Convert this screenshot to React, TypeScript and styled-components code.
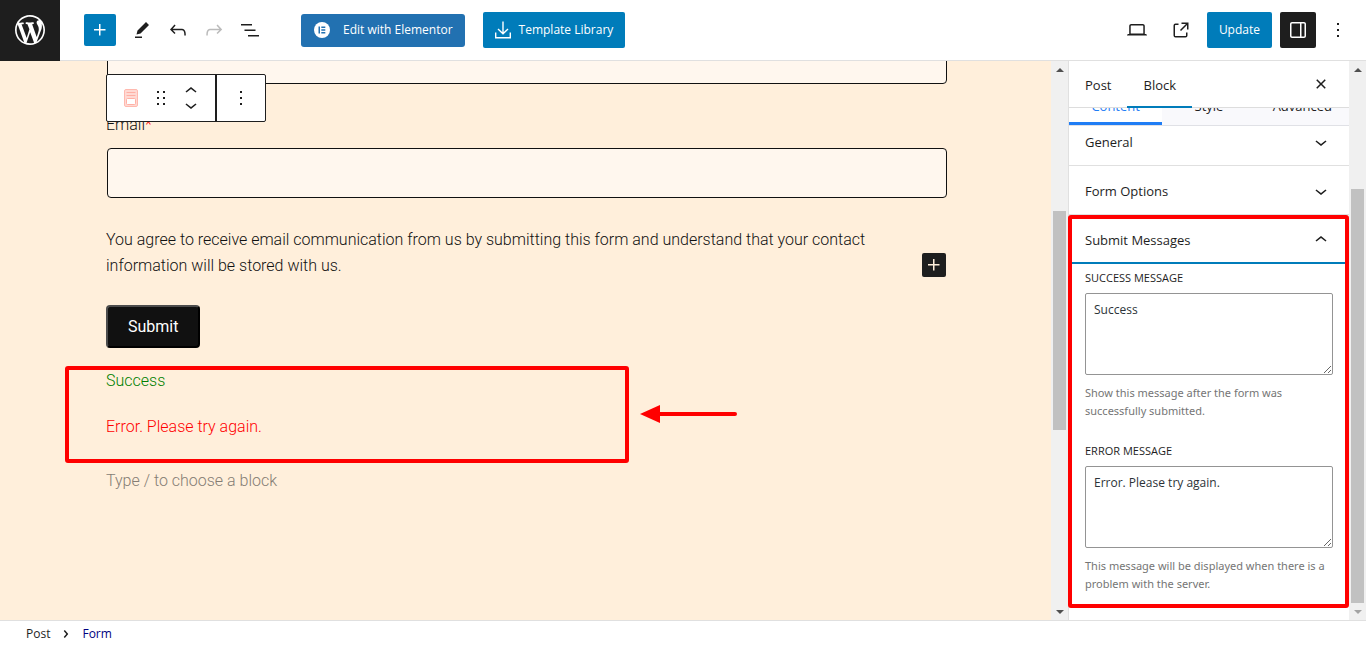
import React from "react";
import styled, { createGlobalStyle } from "styled-components";

const UI_FONT = '"Open Sans", "Noto Sans", sans-serif';
const BLUE = "#007cba";
const INK = "#1e1e1e";
const RED = "#ff0000";

const GlobalStyle = createGlobalStyle`
  *, *::before, *::after { box-sizing: border-box; }
  body { margin: 0; background: #fff; color: ${INK}; font: 12px/20px ${UI_FONT}; }
  button { font: inherit; color: inherit; border: 0; padding: 0; background: none; cursor: pointer; }
  p { margin: 0; }
  svg { flex: none; }
`;

const Page = styled.div`
  display: flex;
  flex-direction: column;
  height: 100vh;
  min-height: 640px;
`;

/* Header */
const Header = styled.header`
  display: flex;
  align-items: center;
  justify-content: space-between;
  flex: none;
  height: 61px;
  padding-right: 10px;
  border-bottom: 1px solid #e0e0e0;
`;
const Logo = styled.a`
  display: flex;
  align-items: center;
  justify-content: center;
  width: 60px;
  height: 61px;
  background: ${INK};
  color: #fff;
`;
const HeaderGroup = styled.div<{ $gap?: number }>`
  display: flex;
  align-items: center;
  gap: ${(p) => p.$gap ?? 0}px;
`;
const Tools = styled.div`
  display: flex;
  align-items: center;
  margin: 0 33px 0 8px;
`;
const ToolButton = styled.button<{ $muted?: boolean; $dark?: boolean }>`
  display: flex;
  align-items: center;
  justify-content: center;
  width: 36px;
  height: 36px;
  border-radius: 2px;
  color: ${(p) => (p.$dark ? "#fff" : p.$muted ? "#bbb" : INK)};
  background: ${(p) => (p.$dark ? INK : "transparent")};
`;
const AddButton = styled.button`
  display: flex;
  align-items: center;
  justify-content: center;
  width: 32px;
  height: 32px;
  margin-left: 24px;
  border-radius: 2px;
  background: ${BLUE};
  color: #fff;
`;
const PrimaryButton = styled.button<{ $elementor?: boolean }>`
  display: flex;
  align-items: center;
  gap: ${(p) => (p.$elementor ? 12 : 8)}px;
  height: ${(p) => (p.$elementor ? 33 : 36)}px;
  padding: 0 12px;
  border-radius: ${(p) => (p.$elementor ? 3 : 2)}px;
  background: ${(p) => (p.$elementor ? "#2271b1" : BLUE)};
  color: #fff;
  white-space: nowrap;
`;

/* Body */
const Body = styled.div`
  display: flex;
  flex: 1;
  min-height: 0;
`;
const Canvas = styled.main`
  position: relative;
  flex: 1;
  min-width: 0;
  overflow: hidden;
  background: #ffefdb;
  color: #111;
  font: 300 16px/26px Roboto, sans-serif;
`;
const Form = styled.form`
  display: flex;
  flex-direction: column;
  margin-top: -27px;
  padding: 0 104px 0 106px;
`;
const FieldInput = styled.input`
  height: 50px;
  margin-left: 1px;
  padding: 0 16px;
  border: 1px solid #111;
  border-radius: 4px;
  background: #fff7ee;
  font: inherit;
`;
const FieldLabel = styled.label`
  margin: 28px 0 10px;
  span { color: ${RED}; }
`;
const Consent = styled.p`
  position: relative;
  margin: 29px 0 26px;
  padding-right: 60px;
`;
const InlineAdd = styled.button`
  position: absolute;
  right: 1px;
  bottom: 2px;
  display: flex;
  align-items: center;
  justify-content: center;
  width: 24px;
  height: 24px;
  border-radius: 2px;
  background: ${INK};
  color: #ffefdb;
`;
const SubmitButton = styled.button`
  align-self: flex-start;
  height: 43px;
  padding: 0 20px;
  border: 2px outset #111;
  border-color: #4c4c4c #000 #000 #4c4c4c;
  border-radius: 4px;
  background: #111;
  color: #fff;
  font-weight: 400;
`;
const Messages = styled.div`
  position: relative;
  display: flex;
  flex-direction: column;
  gap: 20px;
  margin: 20px 0 28px;
`;
const Message = styled.p<{ $error?: boolean }>`
  color: ${(p) => (p.$error ? RED : "#008000")};
`;
const MessagesMark = styled.div`
  position: absolute;
  top: -2px;
  left: -41px;
  width: 564px;
  height: 97px;
  border: 4px solid ${RED};
  border-radius: 3px;
`;
const Arrow = styled.svg`
  position: absolute;
  top: 37px;
  left: 534px;
`;
const Prompt = styled.p`
  color: #857d74;
`;
const BlockToolbar = styled.div`
  position: absolute;
  top: 13px;
  left: 106px;
  display: flex;
  height: 48px;
  border: 1px solid ${INK};
  border-radius: 2px;
  background: #fff;
  color: ${INK};
`;
const ToolbarGroup = styled.div`
  display: flex;
  align-items: center;
  & + & { border-left: 2px solid ${INK}; }
`;
const ToolbarButton = styled.button<{ $width: number }>`
  display: flex;
  align-items: center;
  justify-content: center;
  width: ${(p) => p.$width}px;
  height: 46px;
`;
const Movers = styled.div`
  display: flex;
  flex-direction: column;
  width: 48px;
  button {
    display: flex;
    align-items: center;
    justify-content: center;
    height: 14px;
    overflow: hidden;
  }
`;

/* Scrollbar */
const Track = styled.div`
  display: flex;
  flex-direction: column;
  flex: none;
  width: 17px;
  background: #f0f0f0;
`;
const TrackEnd = styled.div`
  display: flex;
  align-items: center;
  justify-content: center;
  height: 17px;
`;
const TrackSpace = styled.div<{ $grow: number }>`
  flex: ${(p) => p.$grow} 1 0;
`;
const Thumb = styled.div<{ $grow: number }>`
  flex: ${(p) => p.$grow} 1 0;
  margin: 0 2px;
  background: #c1c1c1;
`;

/* Sidebar */
const Sidebar = styled.aside`
  display: flex;
  flex: none;
  width: 298px;
  border-left: 1px solid #e0e0e0;
`;
const SidebarMain = styled.div`
  flex: 1;
  min-width: 0;
`;
const SidebarHeader = styled.div`
  display: flex;
  align-items: center;
  height: 47px;
  padding-right: 16px;
  border-bottom: 1px solid #ddd;
`;
const SidebarTab = styled.button<{ $active?: boolean }>`
  height: 47px;
  margin-bottom: -1px;
  padding: 2px 16px 0;
  border-bottom: 2px solid ${(p) => (p.$active ? BLUE : "transparent")};
  font-size: 13px;
`;
const CloseButton = styled.button`
  display: flex;
  margin-left: auto;
`;
const PanelTabs = styled.div`
  position: relative;
  z-index: 1;
  display: flex;
  align-items: flex-end;
  height: 18px;
  overflow: hidden;
  border-bottom: 1px solid #e0e1e6;
  background: #f9f9fc;
`;
const PanelTab = styled.button<{ $active?: boolean }>`
  flex: 1;
  height: 41px;
  padding-top: 5px;
  border-bottom: 3px solid ${(p) => (p.$active ? "#1f7df5" : "transparent")};
  background: ${(p) => (p.$active ? "#fff" : "transparent")};
  color: ${(p) => (p.$active ? "#1f7df5" : INK)};
  font-size: 13px;
`;
const Panels = styled.div`
  margin-top: -9px;
`;
const PanelHeader = styled.button<{ $open?: boolean }>`
  display: flex;
  align-items: center;
  justify-content: space-between;
  width: 100%;
  height: 49px;
  padding: 2px 16px 0;
  border-bottom: ${(p) => (p.$open ? `2px solid ${BLUE}` : "1px solid #e0e0e0")};
  font-size: 13px;
`;
const OpenPanel = styled.section`
  position: relative;
  padding-bottom: 15px;
`;
const PanelMark = styled.div`
  position: absolute;
  top: 0;
  left: -1px;
  right: 0;
  bottom: 0;
  border: 4px solid ${RED};
  border-radius: 3px;
  pointer-events: none;
`;
const Control = styled.div`
  display: flex;
  flex-direction: column;
  margin: 4px 16px 0;
  & + & { margin-top: 21px; }
`;
const ControlLabel = styled.label`
  margin-bottom: 5px;
  font-size: 11px;
  font-weight: 500;
  text-transform: uppercase;
`;
const TextArea = styled.textarea`
  height: 82px;
  padding: 6px 8px;
  border: 1px solid #949494;
  border-radius: 2px;
  color: #2c3338;
  font: 12px/20px ${UI_FONT};
  resize: vertical;
`;
const Help = styled.p`
  margin-top: 9px;
  color: #757575;
  font: 11px/18px "Noto Sans", sans-serif;
`;

/* Footer */
const Footer = styled.footer`
  flex: none;
  height: 25px;
  padding-left: 26px;
  border-top: 1px solid #e0e0e0;
`;
const Crumbs = styled.nav`
  display: flex;
  align-items: center;
  height: 24px;
  padding-top: 2px;
`;
const Crumb = styled.a<{ $current?: boolean }>`
  color: ${(p) => (p.$current ? "#000080" : INK)};
  text-decoration: none;
`;
const CrumbGap = styled.span`
  display: flex;
  justify-content: center;
  width: 32px;
`;

const paths = {
  plus: "M11 12.5V17.5H12.5V12.5H17.5V11H12.5V6H11V11H6V12.5H11Z",
  edit: "m19 7-3-3-8.5 8.5-1 4 4-1L19 7Zm-7 11.5H5V20h7v-1.5Z",
  undo: "M18.3 11.7c-.6-.6-1.4-.9-2.3-.9H6.7l2.9-3.3-1.1-1-4.5 5L8.5 16l1-1-2.7-2.7H16c.5 0 .9.2 1.3.5 1 1 1 3.4 1 4.5v.3h1.5v-.2c0-1.5 0-4.3-1.5-5.7z",
  redo: "M15.6 6.5l-1.1 1 2.9 3.3H8c-.9 0-1.7.3-2.3.9-1.4 1.5-1.4 4.2-1.4 5.6v.2h1.5v-.3c0-1.1 0-3.5 1-4.5.3-.3.7-.5 1.3-.5h9.2L14.5 15l1.1 1.1 4.6-4.6-4.6-5z",
  list: "M3 6h11v1.5H3V6Zm3.5 5.5h11V13h-11v-1.5ZM21 17H10v1.5h11V17Z",
  laptop: "M20.5 16h-.7V8c0-1.1-.9-2-2-2H6.2c-1.1 0-2 .9-2 2v8h-.7c-.8 0-1.5.7-1.5 1.5h20c0-.8-.7-1.5-1.5-1.5zM5.7 8c0-.3.2-.5.5-.5h11.6c.3 0 .5.2.5.5v7.6H5.7V8z",
  external: "M19.5 4.5h-7V6h4.44l-5.97 5.97 1.06 1.06L18 7.06v4.44h1.5v-7Zm-13 1a2 2 0 0 0-2 2v10a2 2 0 0 0 2 2h10a2 2 0 0 0 2-2v-3H17v3a.5.5 0 0 1-.5.5h-10a.5.5 0 0 1-.5-.5v-10a.5.5 0 0 1 .5-.5h3V5.5h-3Z",
  drawer: "M18 4H6c-1.1 0-2 .9-2 2v12c0 1.1.9 2 2 2h12c1.1 0 2-.9 2-2V6c0-1.1-.9-2-2-2zm-4 14.5H6c-.3 0-.5-.2-.5-.5V6c0-.3.2-.5.5-.5h8v13zm4.5-.5c0 .3-.2.5-.5.5h-2.5v-13H18c.3 0 .5.2.5.5v12z",
  more: "M13 19h-2v-2h2v2zm0-6h-2v-2h2v2zm0-6h-2V5h2v2z",
  close: "M12 13.06l3.712 3.713 1.061-1.06L13.061 12l3.712-3.712-1.06-1.06L12 10.938 8.288 7.227l-1.061 1.06L10.939 12l-3.712 3.712 1.06 1.061L12 13.061z",
  down: "M17.5 11.6L12 16l-5.5-4.4.9-1.2L12 14l4.5-3.6 1 1.2z",
  up: "M6.5 12.4L12 8l5.5 4.4-.9 1.2L12 10l-4.5 3.6-1-1.2z",
  drag: "M8 7h2V5H8v2zm0 6h2v-2H8v2zm0 6h2v-2H8v2zm6-14v2h2V5h-2zm0 8h2v-2h-2v2zm0 6h2v-2h-2v2z",
  right: "M10.8622 8.04053L14.2805 12.0286L10.8622 16.0167L9.72327 15.0405L12.3049 12.0286L9.72327 9.01672L10.8622 8.04053Z",
};

const Icon = ({ name }: { name: keyof typeof paths }) => (
  <svg width="24" height="24" viewBox="0 0 24 24" fill="currentColor" fillRule="evenodd" aria-hidden="true">
    <path d={paths[name]} />
  </svg>
);

const WordPressMark = () => (
  <svg width="36" height="36" viewBox="-2 -2 24 24" fill="currentColor" aria-hidden="true">
    <path d="M20 10c0-5.51-4.49-10-10-10C4.48 0 0 4.49 0 10c0 5.52 4.48 10 10 10 5.51 0 10-4.48 10-10zM7.78 15.37L4.37 6.22c.55-.02 1.17-.08 1.17-.08.5-.06.44-1.13-.06-1.11 0 0-1.45.11-2.37.11-.18 0-.37 0-.58-.01C4.12 2.69 6.87 1.11 10 1.11c2.33 0 4.45.87 6.05 2.34-.68-.11-1.65.39-1.65 1.58 0 .74.45 1.36.9 2.1.35.61.55 1.36.55 2.46 0 1.49-1.4 5-1.4 5l-3.03-8.37c.54-.02.82-.17.82-.17.5-.05.44-1.25-.06-1.22 0 0-1.44.12-2.38.12-.87 0-2.33-.12-2.33-.12-.5-.03-.56 1.2-.06 1.22l.92.08 1.26 3.41zM17.41 10c.24-.64.74-1.87.43-4.25.7 1.29 1.05 2.71 1.05 4.25 0 3.29-1.73 6.24-4.4 7.78.97-2.59 1.94-5.2 2.92-7.78zM6.1 18.09C3.12 16.65 1.11 13.53 1.11 10c0-1.3.23-2.48.72-3.59C3.25 10.3 4.67 14.2 6.1 18.09zm4.03-6.63l2.58 6.98c-.86.29-1.76.45-2.71.45-.79 0-1.57-.11-2.29-.33.81-2.38 1.62-4.74 2.42-7.1z" />
  </svg>
);

const ElementorMark = () => (
  <svg width="18" height="18" viewBox="0 0 18 18" aria-hidden="true">
    <circle cx="9" cy="9" r="8" fill="#fff" />
    <path d="M5.5 5.5h1.5v7H5.5zM8.3 5.5h4v1.4h-4zM8.3 8.3h4v1.4h-4zM8.3 11.1h4v1.4h-4z" fill="#2271b1" />
  </svg>
);

const DownloadMark = () => (
  <svg width="16" height="18" viewBox="0 0 16 18" fill="none" stroke="currentColor" strokeWidth="1.4" aria-hidden="true">
    <path d="M8 .5v12M3 8l5 4.8L13 8M.7 11.5v5.2h14.6v-5.2" />
  </svg>
);

const FormMark = () => (
  <svg width="14" height="18" viewBox="0 0 14 18" aria-hidden="true">
    <rect x=".5" y=".5" width="13" height="17" rx="1.5" fill="#ffd9d3" stroke="#ffb9af" />
    <path d="M2.5 3.5h9M2.5 6.5h9" stroke="#ffb0a5" />
    <rect x="2.5" y="9.5" width="9" height="6" rx="1" fill="#fff" stroke="#ffb0a5" />
  </svg>
);

const Scrollbar = ({ before, size, after }: { before: number; size: number; after: number }) => (
  <Track aria-hidden="true">
    <TrackEnd>
      <svg width="8" height="4" viewBox="0 0 8 4"><path d="M4 0l4 4H0z" fill="#505050" /></svg>
    </TrackEnd>
    <TrackSpace $grow={before} />
    <Thumb $grow={size} />
    <TrackSpace $grow={after} />
    <TrackEnd>
      <svg width="8" height="4" viewBox="0 0 8 4"><path d="M0 0h8L4 4z" fill={after ? "#505050" : "#a3a3a3"} /></svg>
    </TrackEnd>
  </Track>
);

const messageControls = [
  { id: "success", label: "Success message", value: "Success", help: "Show this message after the form was successfully submitted." },
  { id: "error", label: "Error message", value: "Error. Please try again.", help: "This message will be displayed when there is a problem with the server." },
];

export default function App() {
  return (
    <>
      <GlobalStyle />
      <Page>
        <Header>
          <HeaderGroup>
            <Logo href="#" aria-label="View posts"><WordPressMark /></Logo>
            <AddButton aria-label="Add block"><Icon name="plus" /></AddButton>
            <Tools>
              <ToolButton aria-label="Tools"><Icon name="edit" /></ToolButton>
              <ToolButton aria-label="Undo"><Icon name="undo" /></ToolButton>
              <ToolButton aria-label="Redo" $muted><Icon name="redo" /></ToolButton>
              <ToolButton aria-label="Document overview"><Icon name="list" /></ToolButton>
            </Tools>
            <HeaderGroup $gap={18}>
              <PrimaryButton $elementor><ElementorMark />Edit with Elementor</PrimaryButton>
              <PrimaryButton><DownloadMark />Template Library</PrimaryButton>
            </HeaderGroup>
          </HeaderGroup>
          <HeaderGroup $gap={4}>
            <HeaderGroup $gap={8}>
              <ToolButton aria-label="Preview"><Icon name="laptop" /></ToolButton>
              <ToolButton aria-label="View post"><Icon name="external" /></ToolButton>
              <PrimaryButton>Update</PrimaryButton>
              <ToolButton aria-label="Settings" $dark><Icon name="drawer" /></ToolButton>
            </HeaderGroup>
            <ToolButton aria-label="Options"><Icon name="more" /></ToolButton>
          </HeaderGroup>
        </Header>

        <Body>
          <Canvas>
            <Form onSubmit={(e) => e.preventDefault()}>
              <FieldInput type="text" aria-label="Name" />
              <FieldLabel htmlFor="email">Email<span>*</span></FieldLabel>
              <FieldInput id="email" type="email" />
              <Consent>
                You agree to receive email communication from us by submitting this form and
                understand that your contact information will be stored with us.
                <InlineAdd type="button" aria-label="Add block"><Icon name="plus" /></InlineAdd>
              </Consent>
              <SubmitButton type="submit">Submit</SubmitButton>
              <Messages>
                <Message>Success</Message>
                <Message $error>Error. Please try again.</Message>
                <MessagesMark />
                <Arrow width="98" height="18" viewBox="0 0 98 18" aria-hidden="true">
                  <path d="M0 9L20 0v18z" fill={RED} />
                  <path d="M18 9h77" stroke={RED} strokeWidth="4" strokeLinecap="round" />
                </Arrow>
              </Messages>
              <Prompt>Type / to choose a block</Prompt>
            </Form>
            <BlockToolbar>
              <ToolbarGroup>
                <ToolbarButton $width={48} aria-label="Form"><FormMark /></ToolbarButton>
                <ToolbarButton $width={12} aria-label="Drag"><Icon name="drag" /></ToolbarButton>
                <Movers>
                  <button aria-label="Move up"><Icon name="up" /></button>
                  <button aria-label="Move down"><Icon name="down" /></button>
                </Movers>
              </ToolbarGroup>
              <ToolbarGroup>
                <ToolbarButton $width={48} aria-label="Options"><Icon name="more" /></ToolbarButton>
              </ToolbarGroup>
            </BlockToolbar>
          </Canvas>
          <Scrollbar before={133} size={219} after={173} />

          <Sidebar>
            <SidebarMain>
              <SidebarHeader>
                <SidebarTab>Post</SidebarTab>
                <SidebarTab $active>Block</SidebarTab>
                <CloseButton aria-label="Close settings"><Icon name="close" /></CloseButton>
              </SidebarHeader>
              <PanelTabs>
                <PanelTab $active>Content</PanelTab>
                <PanelTab>Style</PanelTab>
                <PanelTab>Advanced</PanelTab>
              </PanelTabs>
              <Panels>
                <PanelHeader>General<Icon name="down" /></PanelHeader>
                <PanelHeader>Form Options<Icon name="down" /></PanelHeader>
                <OpenPanel>
                  <PanelHeader $open>Submit Messages<Icon name="up" /></PanelHeader>
                  {messageControls.map((c) => (
                    <Control key={c.id}>
                      <ControlLabel htmlFor={c.id}>{c.label}</ControlLabel>
                      <TextArea id={c.id} defaultValue={c.value} />
                      <Help>{c.help}</Help>
                    </Control>
                  ))}
                  <PanelMark />
                </OpenPanel>
              </Panels>
            </SidebarMain>
            <Scrollbar before={111} size={414} after={0} />
          </Sidebar>
        </Body>

        <Footer>
          <Crumbs aria-label="Block breadcrumb">
            <Crumb href="#">Post</Crumb>
            <CrumbGap><Icon name="right" /></CrumbGap>
            <Crumb href="#" $current>Form</Crumb>
          </Crumbs>
        </Footer>
      </Page>
    </>
  );
}
